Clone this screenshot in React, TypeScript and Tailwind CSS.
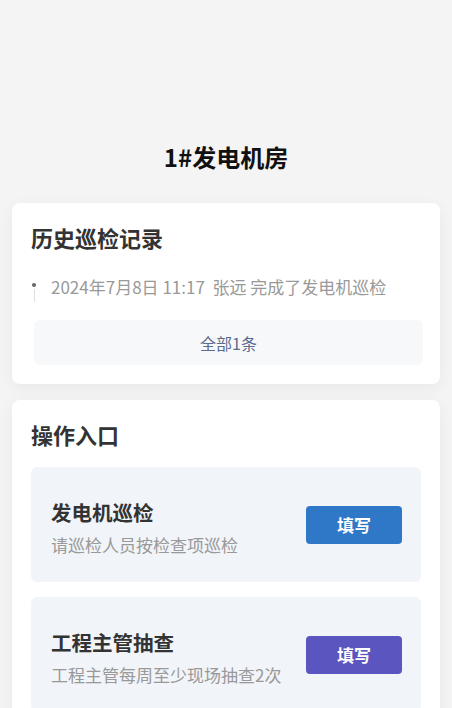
import React from "react";

export default function App() {
  const font = { fontFamily: '"Noto Sans CJK SC", "Noto Sans", sans-serif' };
  return (
    <div className="min-h-[708px] bg-[#f4f4f5] px-3 pt-[139px]" style={font}>
      <h1 className="text-center text-[24px] font-bold text-[#111] leading-[36px]">1#发电机房</h1>
      <div className="mt-[28px] rounded-lg bg-white px-[19px] pt-[19px] pb-[19px] shadow-[0_4px_16px_rgba(0,0,0,0.05)]">
        <div className="text-[22px] font-bold text-[#333] leading-[30px]">历史巡检记录</div>
        <div className="mt-[22px] flex items-start">
          <div className="relative ml-[1px] w-[19px] h-[26px]">
            <div className="absolute left-[0px] top-[9px] w-[4px] h-[4px] rounded-full bg-[#666]" />
            <div className="absolute left-[1.5px] top-[15px] w-[1px] h-[13px] bg-[#ddd]" />
          </div>
          <div className="text-[17px] text-[#999] leading-[26px]">2024年7月8日 11:17&nbsp;&nbsp;张远 完成了发电机巡检</div>
        </div>
        <div className="mt-[20px] ml-[3px] mr-[-2px] flex h-[45px] items-center justify-center rounded-md bg-[#f7f8fa] text-[16px] text-[#5b6b8c]">
          全部1条
        </div>
      </div>
      <div className="mt-[16px] rounded-t-lg bg-white px-[19px] pt-[19px] pb-[20px] shadow-[0_4px_16px_rgba(0,0,0,0.05)]">
        <div className="text-[22px] font-bold text-[#333] leading-[30px]">操作入口</div>
        <div className="mt-[18px] flex flex-col gap-[15px]">
          <div className="flex h-[115px] items-center justify-between rounded-md bg-[#f1f4f8] pl-[20px] pr-[19px]">
            <div className="pt-[6px]">
              <div className="text-[20.5px] font-bold text-[#333] leading-[30px]">发电机巡检</div>
              <div className="mt-[5px] text-[17px] text-[#999] leading-[26px]">请巡检人员按检查项巡检</div>
            </div>
            <div className="flex h-[38px] w-[96px] items-center justify-center rounded-[4px] bg-[#2f78c8] text-[17px] font-bold text-white">填写</div>
          </div>
          <div className="flex h-[115px] items-center justify-between rounded-md bg-[#f1f4f8] pl-[20px] pr-[19px]">
            <div className="pt-[6px]">
              <div className="text-[20.5px] font-bold text-[#333] leading-[30px]">工程主管抽查</div>
              <div className="mt-[5px] text-[17px] text-[#999] leading-[26px]">工程主管每周至少现场抽查2次</div>
            </div>
            <div className="flex h-[38px] w-[96px] items-center justify-center rounded-[4px] bg-[#5b55c0] text-[17px] font-bold text-white">填写</div>
          </div>
        </div>
      </div>
    </div>
  );
}
